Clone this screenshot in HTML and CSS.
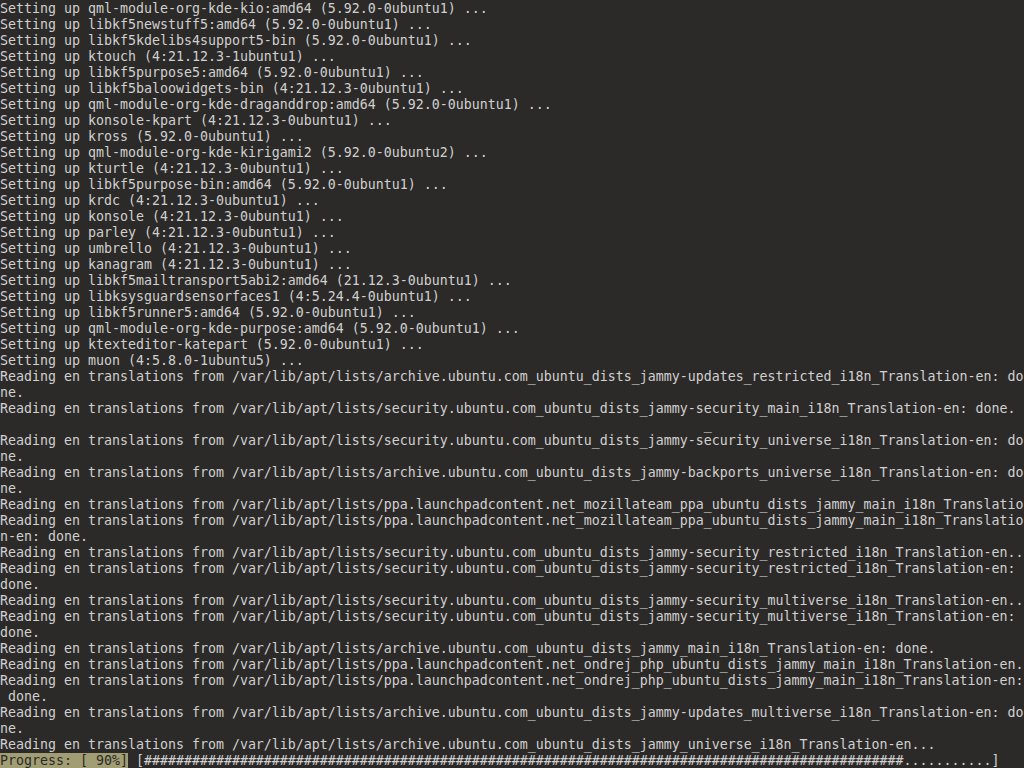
FILE: index.html
```html
<!DOCTYPE html>
<html lang="en">
<head>
<meta charset="utf-8">
<title>Terminal</title>
<link rel="stylesheet" href="styles.css">
</head>
<body>
<pre class="term">Setting up qml-module-org-kde-kio:amd64 (5.92.0-0ubuntu1) ...
Setting up libkf5newstuff5:amd64 (5.92.0-0ubuntu1) ...
Setting up libkf5kdelibs4support5-bin (5.92.0-0ubuntu1) ...
Setting up ktouch (4:21.12.3-1ubuntu1) ...
Setting up libkf5purpose5:amd64 (5.92.0-0ubuntu1) ...
Setting up libkf5baloowidgets-bin (4:21.12.3-0ubuntu1) ...
Setting up qml-module-org-kde-draganddrop:amd64 (5.92.0-0ubuntu1) ...
Setting up konsole-kpart (4:21.12.3-0ubuntu1) ...
Setting up kross (5.92.0-0ubuntu1) ...
Setting up qml-module-org-kde-kirigami2 (5.92.0-0ubuntu2) ...
Setting up kturtle (4:21.12.3-0ubuntu1) ...
Setting up libkf5purpose-bin:amd64 (5.92.0-0ubuntu1) ...
Setting up krdc (4:21.12.3-0ubuntu1) ...
Setting up konsole (4:21.12.3-0ubuntu1) ...
Setting up parley (4:21.12.3-0ubuntu1) ...
Setting up umbrello (4:21.12.3-0ubuntu1) ...
Setting up kanagram (4:21.12.3-0ubuntu1) ...
Setting up libkf5mailtransport5abi2:amd64 (21.12.3-0ubuntu1) ...
Setting up libksysguardsensorfaces1 (4:5.24.4-0ubuntu1) ...
Setting up libkf5runner5:amd64 (5.92.0-0ubuntu1) ...
Setting up qml-module-org-kde-purpose:amd64 (5.92.0-0ubuntu1) ...
Setting up ktexteditor-katepart (5.92.0-0ubuntu1) ...
Setting up muon (4:5.8.0-1ubuntu5) ...
Reading en translations from /var/lib/apt/lists/archive.ubuntu.com_ubuntu_dists_jammy-updates_restricted_i18n_Translation-en: do
ne.
Reading en translations from /var/lib/apt/lists/security.ubuntu.com_ubuntu_dists_jammy-security_main_i18n_Translation-en: done.
                                                                                        _
Reading en translations from /var/lib/apt/lists/security.ubuntu.com_ubuntu_dists_jammy-security_universe_i18n_Translation-en: do
ne.
Reading en translations from /var/lib/apt/lists/archive.ubuntu.com_ubuntu_dists_jammy-backports_universe_i18n_Translation-en: do
ne.
Reading en translations from /var/lib/apt/lists/ppa.launchpadcontent.net_mozillateam_ppa_ubuntu_dists_jammy_main_i18n_Translatio
Reading en translations from /var/lib/apt/lists/ppa.launchpadcontent.net_mozillateam_ppa_ubuntu_dists_jammy_main_i18n_Translatio
n-en: done.
Reading en translations from /var/lib/apt/lists/security.ubuntu.com_ubuntu_dists_jammy-security_restricted_i18n_Translation-en..
Reading en translations from /var/lib/apt/lists/security.ubuntu.com_ubuntu_dists_jammy-security_restricted_i18n_Translation-en:
done.
Reading en translations from /var/lib/apt/lists/security.ubuntu.com_ubuntu_dists_jammy-security_multiverse_i18n_Translation-en..
Reading en translations from /var/lib/apt/lists/security.ubuntu.com_ubuntu_dists_jammy-security_multiverse_i18n_Translation-en:
done.
Reading en translations from /var/lib/apt/lists/archive.ubuntu.com_ubuntu_dists_jammy_main_i18n_Translation-en: done.
Reading en translations from /var/lib/apt/lists/ppa.launchpadcontent.net_ondrej_php_ubuntu_dists_jammy_main_i18n_Translation-en.
Reading en translations from /var/lib/apt/lists/ppa.launchpadcontent.net_ondrej_php_ubuntu_dists_jammy_main_i18n_Translation-en:
 done.
Reading en translations from /var/lib/apt/lists/archive.ubuntu.com_ubuntu_dists_jammy-updates_multiverse_i18n_Translation-en: do
ne.
Reading en translations from /var/lib/apt/lists/archive.ubuntu.com_ubuntu_dists_jammy_universe_i18n_Translation-en...
<span class="progress">Progress: [ 90%]</span> [###############################################################################################...........]</pre>
</body>
</html>
```

FILE: styles.css
```css
html, body {
  margin: 0;
  padding: 0;
  background: #2c2a28;
  width: 1024px;
  height: 768px;
  overflow: hidden;
}

.term {
  margin: 0;
  padding: 1px 0 0 0;
  font-family: "DejaVu Sans Mono", "Liberation Mono", monospace;
  font-size: 13.29px;
  line-height: 16px;
  color: #d0d0d0;
  white-space: pre;
}

.progress {
  background: #a19e74;
  color: #2c2a28;
  padding-bottom: 1px;
}
```
